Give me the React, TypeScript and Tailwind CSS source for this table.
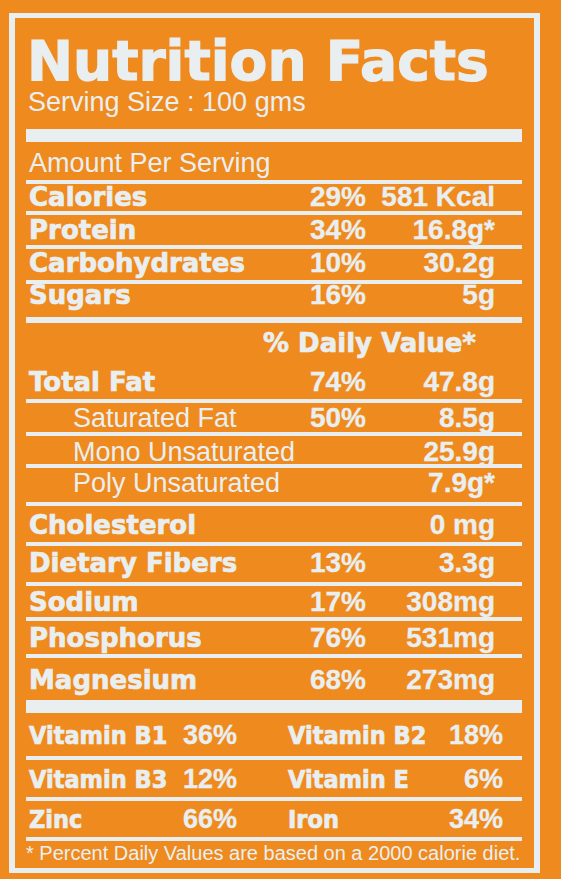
import React from "react";

const LBL = "font-['DejaVu_Sans',sans-serif] font-bold text-[26px] leading-[20px] [-webkit-text-stroke:0.7px_#e9eff0]";
const VLBL = "font-['DejaVu_Sans_Condensed','DejaVu_Sans',sans-serif] font-bold text-[25px] leading-[20px] [-webkit-text-stroke:0.7px_#e9eff0]";
const NUM = "font-['Liberation_Sans',Arial,sans-serif] font-bold text-[28px] leading-[20px] [-webkit-text-stroke:0.3px_#e9eff0]";
const VNUM = "font-['Liberation_Sans',Arial,sans-serif] font-bold text-[27px] leading-[20px] [-webkit-text-stroke:0.3px_#e9eff0]";
const REG = "font-['Liberation_Sans',Arial,sans-serif] text-[27px] leading-[20px]";

function Rule() {
  return <div className="h-[4px] bg-[#e9eff0]" />;
}

type RowProps = { cls: string; label: string; pct?: string; val: string; sub?: boolean };

function NRow({ cls, label, pct, val, sub }: RowProps) {
  return (
    <div className={`flex items-baseline pr-[27px] ${cls}`}>
      <span className={sub ? `flex-1 pl-[47px] ${REG}` : `flex-1 pl-[3px] ${LBL}`}>{label}</span>
      {pct ? <span className={NUM}>{pct}</span> : null}
      <span className={`w-[129px] text-right ${NUM}`}>{val}</span>
    </div>
  );
}

type VProps = { cls: string; a: string; ap: string; b: string; bp: string };

function VRow({ cls, a, ap, b, bp }: VProps) {
  return (
    <div className={`flex items-baseline pl-[3px] ${cls}`}>
      <div className="flex w-[208px] items-baseline justify-between">
        <span className={VLBL}>{a}</span>
        <span className={VNUM}>{ap}</span>
      </div>
      <div className="ml-[51px] flex w-[215px] items-baseline justify-between">
        <span className={VLBL}>{b}</span>
        <span className={VNUM}>{bp}</span>
      </div>
    </div>
  );
}

export default function App() {
  return (
    <div className="h-[879px] w-[561px] overflow-hidden bg-[#ef8a1e] pl-[9px] pt-[13px] text-[#e9eff0]">
      <div className="h-[860px] w-[531px] border-x-[6px] border-y-[5px] border-[#e9eff0] pl-[11px] pr-[12px]">
        <div className="h-[70px] pl-[1px] pt-[18px]">
          <h1 className="font-['DejaVu_Sans',sans-serif] text-[55px] font-bold leading-[50px] [-webkit-text-stroke:1.2px_#e9eff0]">
            Nutrition Facts
          </h1>
        </div>
        <div className="h-[28px] pl-[2px] pt-[1px]">
          <p className="font-['Liberation_Sans',Arial,sans-serif] text-[27px] leading-none">Serving Size : 100 gms</p>
        </div>
        <div className="mt-[13px] h-[13px] bg-[#e9eff0]" />
        <div className="h-[38px] pl-[3px] pt-[11px]">
          <span className={REG}>Amount Per Serving</span>
        </div>
        <Rule />
        <NRow cls="h-[27px] pt-[3px]" label="Calories" pct="29%" val="581 Kcal" />
        <Rule />
        <NRow cls="h-[30px] pt-[5px]" label="Protein" pct="34%" val="16.8g*" />
        <Rule />
        <NRow cls="h-[31px] pt-[4px]" label="Carbohydrates" pct="10%" val="30.2g" />
        <Rule />
        <NRow cls="h-[33px] pt-[1px]" label="Sugars" pct="16%" val="5g" />
        <div className="h-[6px] bg-[#e9eff0]" />
        <div className="h-[37px] pl-[237px] pt-[10px]">
          <span className={LBL}>% Daily Value*</span>
        </div>
        <NRow cls="h-[39px] pt-[12px]" label="Total Fat" pct="74%" val="47.8g" />
        <Rule />
        <NRow cls="h-[29px] pt-[5px]" label="Saturated Fat" pct="50%" val="8.5g" sub />
        <Rule />
        <NRow cls="h-[28px] pt-[6px]" label="Mono Unsaturated" val="25.9g" sub />
        <Rule />
        <NRow cls="h-[34px] pt-[5px]" label="Poly Unsaturated" val="7.9g*" sub />
        <Rule />
        <NRow cls="h-[36px] pt-[9px]" label="Cholesterol" val="0 mg" />
        <Rule />
        <NRow cls="h-[36px] pt-[7px]" label="Dietary Fibers" pct="13%" val="3.3g" />
        <Rule />
        <NRow cls="h-[31px] pt-[6px]" label="Sodium" pct="17%" val="308mg" />
        <Rule />
        <NRow cls="h-[33px] pt-[7px]" label="Phosphorus" pct="76%" val="531mg" />
        <Rule />
        <NRow cls="h-[42px] pt-[12px]" label="Magnesium" pct="68%" val="273mg" />
        <div className="h-[13px] bg-[#e9eff0]" />
        <VRow cls="h-[43px] pt-[12px]" a="Vitamin B1" ap="36%" b="Vitamin B2" bp="18%" />
        <Rule />
        <VRow cls="h-[37px] pt-[9px]" a="Vitamin B3" ap="12%" b="Vitamin E" bp="6%" />
        <Rule />
        <VRow cls="h-[36px] pt-[8px]" a="Zinc" ap="66%" b="Iron" bp="34%" />
        <Rule />
        <div className="h-[27px] pt-[2px]">
          <p className="font-['Liberation_Sans',Arial,sans-serif] text-[20px] leading-[20px]">
            * Percent Daily Values are based on a 2000 calorie diet.
          </p>
        </div>
      </div>
    </div>
  );
}
